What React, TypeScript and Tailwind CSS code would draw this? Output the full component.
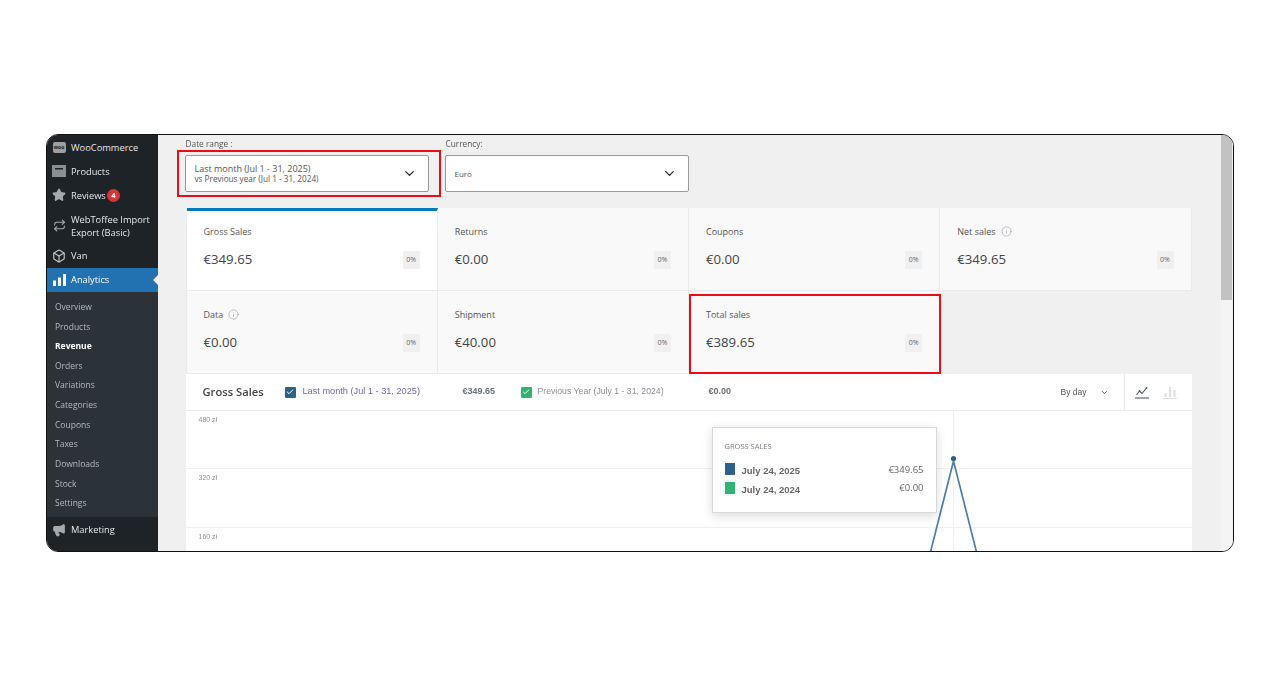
import { Check, ChevronDown, Info, Megaphone, Repeat, Star, Box } from "lucide-react";

const subItems = ["Overview", "Products", "Revenue", "Orders", "Variations", "Categories", "Coupons", "Taxes", "Downloads", "Stock", "Settings"];

const cards = [
  { label: "Gross Sales", value: "€349.65", active: true },
  { label: "Returns", value: "€0.00" },
  { label: "Coupons", value: "€0.00" },
  { label: "Net sales", value: "€349.65", info: true },
  { label: "Data", value: "€0.00", info: true },
  { label: "Shipment", value: "€40.00" },
  { label: "Total sales", value: "€389.65", marked: true },
];

function MenuItem({ icon, label, className = "" }: { icon: React.ReactNode; label: React.ReactNode; className?: string }) {
  return (
    <div className={`flex items-center h-[24.2px] text-[9.3px] text-[#e6e8e9] ${className}`}>
      <div className="w-[24px] flex justify-center shrink-0">{icon}</div>
      <div className="leading-[13px] whitespace-nowrap">{label}</div>
    </div>
  );
}

function Sidebar() {
  return (
    <div className="w-[111px] shrink-0 bg-[#1d2327] flex flex-col">
      <MenuItem
        icon={
          <div className="w-[13px] h-[11px] rounded-[2px] bg-[#9ca0a4] text-[5px] leading-[11px] text-center font-bold text-[#1d2327]">woo</div>
        }
        label="WooCommerce"
      />
      <MenuItem
        icon={
          <svg width="14" height="12" viewBox="0 0 14 12">
            <path d="M0 0h14v12H0z" fill="#8b8f93" />
            <path d="M3 3h8v1.5H3z" fill="#1d2327" />
          </svg>
        }
        label="Products"
      />
      <MenuItem
        icon={<Star size={14} className="fill-[#a7aaad] text-[#a7aaad]" />}
        label={
          <span className="flex items-center gap-[1px]">
            Reviews
            <span className="w-[13px] h-[13px] rounded-full bg-[#d63638] text-white text-[7.5px] leading-[13px] text-center font-bold">4</span>
          </span>
        }
      />
      <MenuItem icon={<Repeat size={13} className="text-[#a7aaad]" />} label={<>WebToffee Import<br />Export (Basic)</>} className="h-[36px]" />
      <MenuItem icon={<Box size={14} className="text-[#c3c4c7]" />} label="Van" />
      <div className="relative">
        <MenuItem
          icon={
            <svg width="13" height="12" viewBox="0 0 13 12" fill="#fff">
              <path d="M0 6.5h3V12H0zM5 3.5h3V12H5zM10 0h3v12h-3z" />
            </svg>
          }
          label="Analytics"
          className="bg-[#2271b1] text-white h-[23px]"
        />
        <div className="absolute right-0 top-[7px] w-0 h-0 border-y-[5px] border-y-transparent border-r-[5px] border-r-[#f0f0f1]" />
      </div>
      <div className="bg-[#2c3338] pt-[5.5px] pb-[3.5px] flex flex-col">
        {subItems.map((item) => (
          <div key={item} className={`h-[19.65px] pl-[8px] flex items-center text-[8.5px] ${item === "Revenue" ? "text-white font-bold" : "text-[#b4b9be]"}`}>
            {item}
          </div>
        ))}
      </div>
      <MenuItem icon={<Megaphone size={14} className="fill-[#a7aaad] text-[#a7aaad]" />} label="Marketing" className="h-[26px]" />
    </div>
  );
}

function Select({ children, marked }: { children: React.ReactNode; marked?: boolean }) {
  return (
    <div className="relative w-[244px] h-[37px] bg-white border border-[#9a9a9a] rounded-[2px] flex items-center justify-between pl-[9px] pr-[11px]">
      {children}
      <ChevronDown size={15} strokeWidth={2.2} className="text-[#2f2f2f] shrink-0" />
      {marked && <div className="absolute -left-[9px] -top-[6px] w-[264px] h-[47px] border-[2.5px] border-[#ee0c14]" />}
    </div>
  );
}

function Card({ label, value, active, info, marked }: { label: string; value: string; active?: boolean; info?: boolean; marked?: boolean }) {
  return (
    <div className={`relative h-[83px] border-r border-b border-[#ebebec] px-[17px] ${active ? "bg-white border-t-[3px] border-t-[#007cba] pt-[14px]" : "bg-[#f9f9fa] pt-[17px]"}`}>
      <div className="flex items-center gap-[5px] text-[9px] leading-[13px] text-[#555]">
        {label}
        {info && <Info size={11} strokeWidth={1.2} className="text-[#8c8f94]" />}
      </div>
      <div className="mt-[12px] flex items-center justify-between">
        <span className="text-[13.2px] leading-[19px] text-[#444]">{value}</span>
        <span className="w-[17px] h-[18px] bg-[#f0f0f1] text-[7px] leading-[18px] text-center text-[#666]">0%</span>
      </div>
      {marked && <div className="absolute left-0 top-[3px] w-[252px] h-[80px] border-[2.5px] border-[#ee0c14]" />}
    </div>
  );
}

function LegendBox({ color }: { color: string }) {
  return (
    <span className={`w-[11px] h-[11px] rounded-[1px] flex items-center justify-center shrink-0 ${color}`}>
      <Check size={8} strokeWidth={3} className="text-white" />
    </span>
  );
}

function ChartHeader() {
  return (
    <div className="h-[37px] bg-white border-b border-[#ebebec] flex items-center font-['Liberation_Sans',sans-serif] text-[9px]">
      <span className="ml-[17px] w-[82px] font-['Open_Sans',sans-serif] text-[11.2px] font-semibold text-[#444]">Gross Sales</span>
      <LegendBox color="bg-[#2c6189]" />
      <span className="ml-[7px] w-[160px] text-[9.2px] text-[#6f68a8]">Last month (Jul 1 - 31, 2025)</span>
      <span className="w-[58px] font-bold text-[9px] text-[#6a7076]">€349.65</span>
      <LegendBox color="bg-[#2fb56f]" />
      <span className="ml-[6px] w-[171px] text-[8.7px] text-[#8a8f94]">Previous Year (July 1 - 31, 2024)</span>
      <span className="font-bold text-[9px] text-[#6a7076]">€0.00</span>
      <span className="ml-auto text-[8.5px] text-[#555]">By day</span>
      <ChevronDown size={9} strokeWidth={2.5} className="ml-[13px] text-[#555]" />
      <div className="ml-[15px] h-full w-[68px] border-l border-[#ebebec] flex items-center justify-center gap-[14px] pr-[4px]">
        <svg width="14" height="13" viewBox="0 0 14 13" fill="none" stroke="#50575e" strokeWidth="1.1">
          <path d="M1.5 9 4.5 5l2.5 2.5L11.5 2" />
          <circle cx="4.5" cy="5" r="0.9" fill="#50575e" stroke="none" />
          <circle cx="11.5" cy="2" r="0.9" fill="#50575e" stroke="none" />
          <path d="M0 12h14" />
        </svg>
        <svg width="14" height="13" viewBox="0 0 14 13" fill="#dcdedf">
          <path d="M1.5 7h2v4h-2zM6 1h2v10H6zM10.5 4h2v7h-2zM0 12h14v1H0z" />
        </svg>
      </div>
    </div>
  );
}

function Chart() {
  return (
    <div className="relative flex-1 bg-white font-['Liberation_Sans',sans-serif] text-[7px] text-[#8c8f94] overflow-hidden">
      {["480 zł", "320 zł", "160 zł"].map((t) => (
        <div key={t} className="h-[58.3px] border-b border-[#f0f0f1] pl-[13px] pt-[4px] leading-[9px]">{t}</div>
      ))}
      {/* line series */}
      <svg className="absolute inset-0 w-full h-full" fill="none">
        <path d="M767.5 0V141" stroke="#efefef" />
        <path d="M744.5 141 767.5 50 790.5 141" stroke="#4a80a8" strokeWidth="1.7" />
        <circle cx="767.5" cy="47.5" r="2.6" fill="#2c6189" />
      </svg>
      <div className="absolute left-[526px] top-[16px] w-[225px] h-[86px] bg-white border border-[#d8d8d8] shadow-[0_3px_10px_rgba(0,0,0,0.14)] px-[12px] pt-[13px]">
        <div className="font-['Open_Sans',sans-serif] text-[7.5px] leading-[11px] text-[#7c8288] mb-[10px]">GROSS SALES</div>
        {[
          { c: "bg-[#2c6189]", d: "July 24, 2025", v: "€349.65" },
          { c: "bg-[#2fb56f]", d: "July 24, 2024", v: "€0.00" },
        ].map((r) => (
          <div key={r.d} className="flex items-center h-[18.5px] text-[9.5px] text-[#666]">
            <span className={`w-[10px] h-[12px] mr-[7px] -mt-[4px] ${r.c}`} />
            <span className="font-bold">{r.d}</span>
            <span className="ml-auto font-['Open_Sans',sans-serif] -mt-[3px]">{r.v}</span>
          </div>
        ))}
      </div>
    </div>
  );
}

export default function App() {
  return (
    <div className="w-[1280px] h-[685px] bg-white pt-[134px] px-[46px] font-['Open_Sans',sans-serif]">
      <div className="w-[1188px] h-[417.5px] rounded-[12px] border-[1.5px] border-[#111] overflow-hidden flex blur-[0.4px]">
        <Sidebar />
        <div className="flex-1 bg-[#f0f0f1] flex min-w-0">
          <div className="flex-1 pl-[27.5px] pr-[29.5px] flex flex-col min-w-0">
            <div className="flex gap-[16px] -ml-[1px] pt-[3px] text-[8.3px] leading-[12px] text-[#555]">
              <div>
                <div className="mb-[5px] ml-[1px]">Date range :</div>
                <Select marked>
                  <div className="text-[8.2px] leading-[10px] text-[#555]">
                    <span className="text-[9px]">Last month (Jul 1 - 31, 2025)</span>
                    <br />
                    vs Previous year (Jul 1 - 31, 2024)
                  </div>
                </Select>
              </div>
              <div>
                <div className="mb-[5px] ml-[1px]">Currency:</div>
                <Select>
                  <span className="text-[8px] text-[#555]">Euro</span>
                </Select>
              </div>
            </div>
            <div className="mt-[16px] grid grid-cols-4 border-l border-[#ebebec]">
              {cards.map((c) => (
                <Card key={c.label} {...c} />
              ))}
            </div>
            <ChartHeader />
            <Chart />
          </div>
          <div className="w-[11px] mr-[1px] bg-[#f4f4f4]">
            <div className="h-[165px] bg-[#c2c2c2]" />
          </div>
        </div>
      </div>
    </div>
  );
}
